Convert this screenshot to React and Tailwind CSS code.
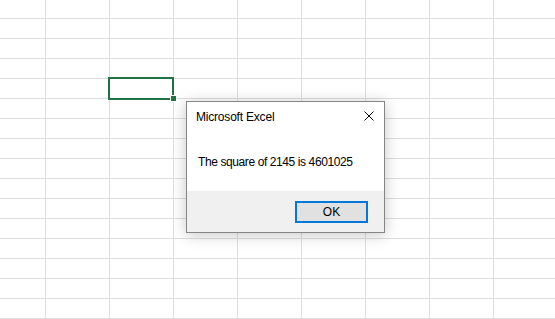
export default function App() {
  const cells = [];
  for (let r = 0; r < 16; r++) {
    for (let c = 0; c < 9; c++) {
      cells.push(<div key={r + "-" + c} className="border-r border-b border-[#dedede]" />);
    }
  }
  return (
    <div className="relative w-[555px] h-[319px] overflow-hidden bg-white font-['Liberation_Sans',Arial,sans-serif] text-black">
      <div className="grid grid-cols-[46px_repeat(8,64px)] grid-rows-[19px_repeat(15,20px)]">
        {cells}
      </div>
      {/* selected cell */}
      <div className="absolute left-[108px] top-[77px] w-[66px] h-[23px] border-2 border-[#217346]" />
      <div className="absolute left-[170px] top-[95px] w-[7px] h-[7px] border border-white bg-[#217346]" />

      {/* dialog */}
      <div className="absolute left-[186px] top-[101px] w-[199px] h-[132px] border border-[#858585] bg-white flex flex-col shadow-[0_2px_14px_rgba(0,0,0,0.22)]">
        <div className="flex-1 flex flex-col">
          <div className="flex items-start justify-between pt-[7px] pl-[9px] pr-[10px]">
            <span className="text-[12px] leading-[16px] tracking-[-0.2px]">Microsoft Excel</span>
            <svg width="10" height="10" viewBox="0 0 10 10" className="mt-[2px]" shapeRendering="geometricPrecision">
              <path d="M0.5 0.5 L9.5 9.5 M9.5 0.5 L0.5 9.5" stroke="#000" strokeWidth="1" fill="none" />
            </svg>
          </div>
          <div className="mt-[29px] pl-[11px] text-[12px] leading-[16px] tracking-[-0.4px]">The square of 2145 is 4601025</div>
        </div>
        <div className="h-[41px] bg-[#f0f0f0] flex justify-end items-start pt-[10px] pr-[16px]">
          <button className="w-[73px] h-[22px] border-2 border-[#0078d7] bg-[#e1e1e1] text-[12px] leading-[16px] flex items-center justify-center">
            OK
          </button>
        </div>
      </div>
    </div>
  );
}
